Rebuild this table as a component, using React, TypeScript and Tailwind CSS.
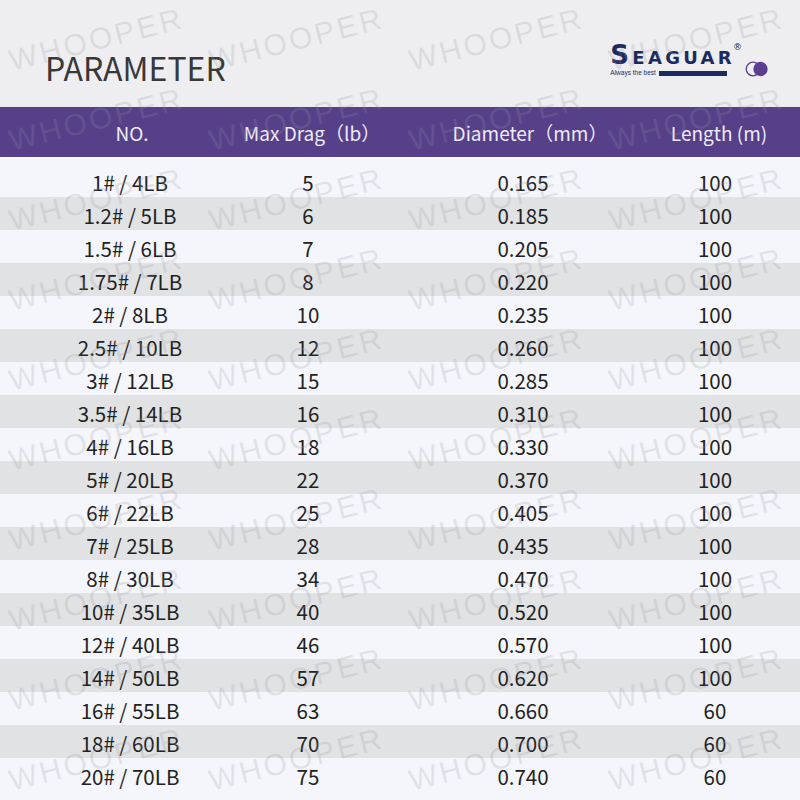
const rows = [
  ["1# / 4LB", "5", "0.165", "100"],
  ["1.2# / 5LB", "6", "0.185", "100"],
  ["1.5# / 6LB", "7", "0.205", "100"],
  ["1.75# / 7LB", "8", "0.220", "100"],
  ["2# / 8LB", "10", "0.235", "100"],
  ["2.5# / 10LB", "12", "0.260", "100"],
  ["3# / 12LB", "15", "0.285", "100"],
  ["3.5# / 14LB", "16", "0.310", "100"],
  ["4# / 16LB", "18", "0.330", "100"],
  ["5# / 20LB", "22", "0.370", "100"],
  ["6# / 22LB", "25", "0.405", "100"],
  ["7# / 25LB", "28", "0.435", "100"],
  ["8# / 30LB", "34", "0.470", "100"],
  ["10# / 35LB", "40", "0.520", "100"],
  ["12# / 40LB", "46", "0.570", "100"],
  ["14# / 50LB", "57", "0.620", "100"],
  ["16# / 55LB", "63", "0.660", "60"],
  ["18# / 60LB", "70", "0.700", "60"],
  ["20# / 70LB", "75", "0.740", "60"],
]

const cols = "grid grid-cols-[260px_96px_334px_50px]"

function Logo() {
  return (
    <div className="flex items-end mt-[42px] mr-[31px]">
      <div className="flex flex-col">
        <div className="flex items-start">
          <span className="font-['DejaVu_Sans',sans-serif] font-bold text-[26px] leading-none tracking-[3.3px] [font-variant:small-caps] text-[#1b2b62]">
            Seaguar
          </span>
          <span className="-ml-[2px] mt-[1px] font-['DejaVu_Sans',sans-serif] text-[9px] leading-none text-[#1b2b62]">
            ®
          </span>
        </div>
        <div className="flex items-center gap-[3px] mt-[2px]">
          <span className="font-['Liberation_Sans',sans-serif] text-[6.5px] leading-none text-[#1b2b62] whitespace-nowrap">
            Always the best
          </span>
          <div className="h-[5px] w-[68px] bg-[#1b2b62]" />
        </div>
      </div>
      <svg width="24" height="18" viewBox="0 0 24 18" className="ml-[3px] mb-[-1px]">
        <circle cx="8" cy="9" r="6.8" fill="none" stroke="#5a3f8f" strokeWidth="1.3" />
        <circle cx="15.5" cy="9" r="7.2" fill="#5a3f8f" />
      </svg>
    </div>
  )
}

function Watermarks() {
  const marks = []
  for (let r = -1; r < 11; r++) {
    for (let c = 0; c < 4; c++) {
      marks.push(
        <span
          key={`${r}-${c}`}
          className="absolute origin-[0_25.4px] -rotate-[14deg] whitespace-nowrap font-['Liberation_Sans',sans-serif] text-[30px] leading-none tracking-[3px] text-[rgba(150,150,162,0.22)]"
          style={{ left: 12 + c * 200, top: 71 + r * 80 - 25.4 }}
        >
          WHOOPER
        </span>
      )
    }
  }
  return <div className="absolute inset-0 overflow-hidden pointer-events-none">{marks}</div>
}

export default function App() {
  return (
    <div className="relative w-[800px] h-[800px] overflow-hidden bg-[#eeeef0] font-['Noto_Sans_CJK_SC','Noto_Sans',sans-serif]">
      <div className="h-[107px] flex justify-between items-start">
        <h1 className="pt-[51px] pl-[45px] text-[32px] leading-none text-[#383838] font-normal">PARAMETER</h1>
        <Logo />
      </div>

      <div className={`${cols} h-[50px] items-center bg-[#56408a] text-[19px] text-[#eeebf5] leading-none`}>
        <div className="flex justify-center whitespace-nowrap pl-[4px]">NO.</div>
        <div className="flex justify-center whitespace-nowrap pl-[8px]">Max Drag（lb）</div>
        <div className="flex justify-center whitespace-nowrap pl-[14px]">Diameter（mm）</div>
        <div className="flex justify-center whitespace-nowrap pl-[8px]">Length (m)</div>
      </div>

      <div className="bg-[#f5f6fb] pt-[7px] h-[643px]">
        {rows.map((row, i) => (
          <div
            key={i}
            className={`${cols} h-[33px] items-center pt-[3px] text-[20.5px] leading-none text-[#222222] ${
              i % 2 === 1 ? "bg-[#e1e2e4]" : "bg-[#f5f6fb]"
            }`}
          >
            {row.map((cell, j) => (
              <div key={j} className="flex justify-center whitespace-nowrap">
                {cell}
              </div>
            ))}
          </div>
        ))}
      </div>

      <Watermarks />
    </div>
  )
}
